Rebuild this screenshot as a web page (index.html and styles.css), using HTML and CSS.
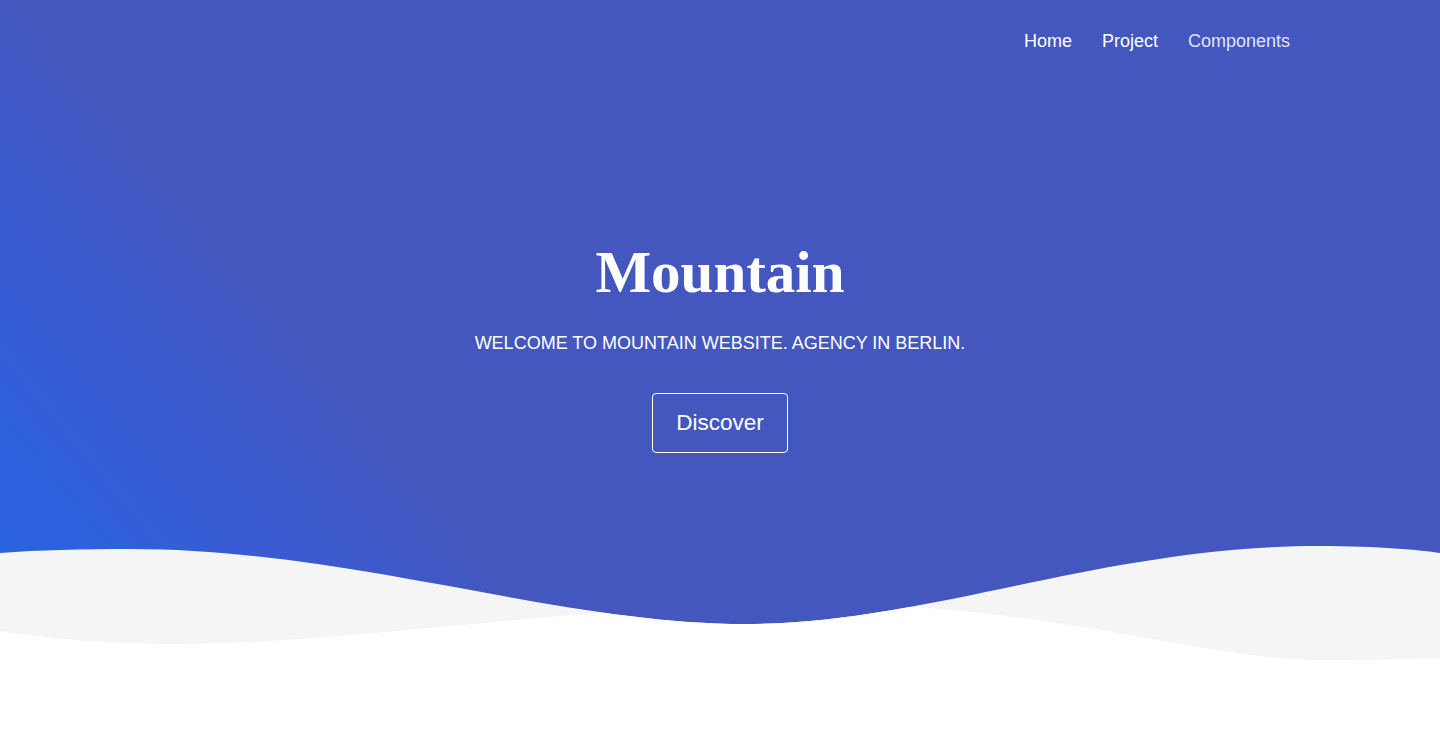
FILE: index.html
```html
<!DOCTYPE html>
<html lang="en">
<head>
<meta charset="utf-8">
<title>Mountain</title>
<link rel="stylesheet" href="styles.css">
</head>
<body>
<header class="hero">
  <nav class="nav">
    <a class="nav-link" href="#">Home</a>
    <a class="nav-link" href="#">Project</a>
    <a class="nav-link nav-link-muted" href="#">Components</a>
  </nav>
  <div class="hero-content">
    <h1 class="hero-title">Mountain</h1>
    <p class="hero-subtitle">WELCOME TO MOUNTAIN WEBSITE. AGENCY IN BERLIN.</p>
    <a class="hero-button" href="#">Discover</a>
  </div>
  <svg class="hero-wave" viewBox="0 540 1440 199" preserveAspectRatio="none" xmlns="http://www.w3.org/2000/svg">
    <defs>
      <clipPath id="belowBlue">
        <path d="M0 553 C40 550 80 549 130 549 C350 549 560 624 745 624 C930 624 1100 546 1320 546 C1380 546 1420 550 1440 553 L1440 739 L0 739 Z"/>
      </clipPath>
    </defs>
    <path fill="#f5f5f5" d="M0 553 C40 550 80 549 130 549 C350 549 560 624 745 624 C930 624 1100 546 1320 546 C1380 546 1420 550 1440 553 L1440 739 L0 739 Z"/>
    <path fill="#ffffff" clip-path="url(#belowBlue)" d="M0 631 C60 640 110 644 180 644 C350 644 600 603 800 603 C1050 603 1200 660 1320 660 C1380 660 1420 659 1440 658 L1440 739 L0 739 Z"/>
  </svg>
</header>
</body>
</html>
```

FILE: styles.css
```css
* {
  box-sizing: border-box;
}

html, body {
  margin: 0;
  padding: 0;
  background: #ffffff;
}

body {
  font-family: "Liberation Sans", Arial, sans-serif;
  color: #ffffff;
}

.hero {
  position: relative;
  height: 739px;
  overflow: hidden;
  background: linear-gradient(50deg, #2563e0 0%, #2d61dd 12%, #3a5bd1 21%, #4357be 31%, #4357be 100%);
}

.nav {
  display: flex;
  justify-content: flex-end;
  gap: 30px;
  padding: 31px 150px 0 0;
  height: 51px;
}

.nav-link {
  color: #ffffff;
  text-decoration: none;
  font-size: 18px;
  line-height: 21px;
}

.nav-link-muted {
  color: rgba(255, 255, 255, 0.86);
}

.hero-content {
  display: flex;
  flex-direction: column;
  align-items: center;
  padding-top: 186px;
  position: relative;
  z-index: 1;
}

.hero-title {
  margin: 0;
  font-family: "Liberation Serif", "Times New Roman", serif;
  font-weight: 700;
  font-size: 59px;
  line-height: 71px;
}

.hero-subtitle {
  margin: 25px 0 0;
  font-size: 18px;
  line-height: 21px;
}

.hero-button {
  margin-top: 39px;
  display: inline-block;
  padding: 16px 23px;
  border: 1px solid #ffffff;
  border-radius: 4px;
  color: #ffffff;
  text-decoration: none;
  font-size: 22.5px;
  line-height: 26px;
}

.hero-wave {
  position: absolute;
  left: 0;
  bottom: 0;
  width: 100%;
  height: 199px;
  display: block;
}
```
